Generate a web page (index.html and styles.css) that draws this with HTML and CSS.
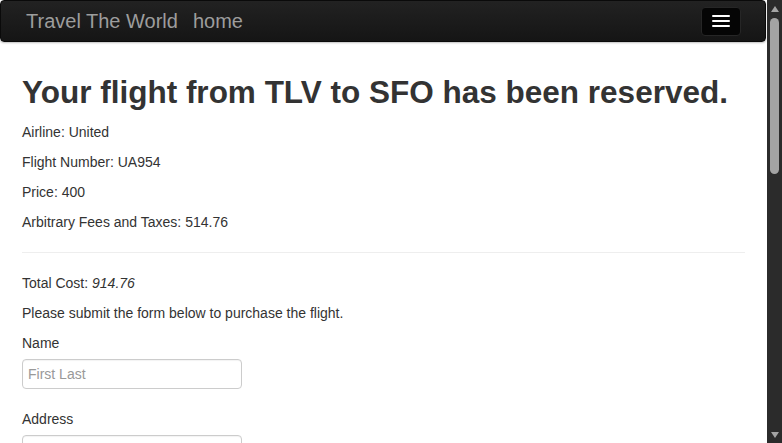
FILE: index.html
```html
<!DOCTYPE html>
<html lang="en">
<head>
<meta charset="utf-8">
<title>Travel The World</title>
<link rel="stylesheet" href="styles.css">
</head>
<body>
<div class="window">
  <div class="page">
    <nav class="navbar">
      <div class="nav-left">
        <a class="brand" href="#">Travel The World</a>
        <a class="nav-link" href="#">home</a>
      </div>
      <button class="toggle" type="button" aria-label="Toggle navigation">
        <span class="bar"></span><span class="bar"></span><span class="bar"></span>
      </button>
    </nav>
    <main class="container">
      <h1 class="title">Your flight from TLV to SFO has been reserved.</h1>
      <p class="line">Airline: United</p>
      <p class="line">Flight Number: UA954</p>
      <p class="line">Price: 400</p>
      <p class="line">Arbitrary Fees and Taxes: 514.76</p>
      <hr class="rule">
      <p class="line">Total Cost: <em>914.76</em></p>
      <p class="line">Please submit the form below to purchase the flight.</p>
      <form class="form">
        <div class="form-group">
          <label class="label" for="name">Name</label>
          <input class="input" id="name" type="text" placeholder="First Last">
        </div>
        <div class="form-group">
          <label class="label" for="address">Address</label>
          <input class="input" id="address" type="text">
        </div>
      </form>
    </main>
  </div>
  <div class="scrollbar" aria-hidden="true">
    <div class="sb-button"><span class="arrow-up"></span></div>
    <div class="sb-track"><div class="sb-thumb"></div></div>
    <div class="sb-button"><span class="arrow-down"></span></div>
  </div>
</div>
</body>
</html>
```
FILE: styles.css
```css
html,
body {
  height: 100%;
}
body {
  margin: 0;
  font-family: "Liberation Sans", Arial, Helvetica, sans-serif;
  font-size: 14px;
  line-height: 20px;
  color: #333;
  background: #fff;
  overflow: hidden;
}
.window {
  display: flex;
  height: 100%;
}
.page {
  flex: 1;
  min-width: 0;
  overflow: hidden;
}
.scrollbar {
  display: flex;
  flex-direction: column;
  width: 15px;
  flex-shrink: 0;
  background: #2b2b2b;
}
.sb-button {
  display: flex;
  align-items: center;
  justify-content: center;
  height: 17px;
}
.arrow-up {
  width: 0;
  height: 0;
  border-left: 4.5px solid transparent;
  border-right: 4.5px solid transparent;
  border-bottom: 6px solid #a3a3a3;
}
.arrow-down {
  width: 0;
  height: 0;
  border-left: 4.5px solid transparent;
  border-right: 4.5px solid transparent;
  border-top: 6px solid #a3a3a3;
}
.sb-track {
  flex: 1;
  display: flex;
  justify-content: center;
  padding-top: 1px;
}
.sb-thumb {
  width: 9px;
  height: 156px;
  background: #a3a3a3;
  border-radius: 5px;
}
.navbar {
  display: flex;
  align-items: center;
  justify-content: space-between;
  height: 40px;
  margin-right: 1px;
  background: linear-gradient(to bottom, #222 0%, #151515 100%);
  border: 1px solid #0a0a0a;
  border-radius: 4px;
  box-shadow: 0 1px 2px rgba(0, 0, 0, 0.25);
}
.nav-left {
  display: flex;
  align-items: baseline;
  gap: 15px;
  padding-left: 25px;
}
.brand,
.nav-link {
  color: #9d9d9d;
  font-size: 20px;
  line-height: 24px;
  text-decoration: none;
}
.toggle {
  display: flex;
  flex-direction: column;
  align-items: center;
  justify-content: center;
  gap: 3px;
  width: 40px;
  height: 29px;
  margin-right: 24px;
  padding: 0;
  background: #050505;
  border: 1px solid #262626;
  border-radius: 4px;
}
.bar {
  display: block;
  width: 18px;
  height: 2px;
  background: #fff;
  border-radius: 1px;
}
.container {
  padding: 0 22px;
}
.title {
  margin: 33px 0 13px;
  font-size: 31.5px;
  line-height: 34px;
  font-weight: bold;
  color: #333;
}
.line {
  margin: 0 0 10px;
}
.rule {
  margin: 20px 0;
  border: 0;
  border-top: 1px solid #eee;
}
.form {
  margin: 0;
}
.form-group {
  margin-bottom: 20px;
}
.label {
  display: block;
  margin-bottom: 6px;
  font-weight: normal;
}
.input {
  display: block;
  box-sizing: border-box;
  width: 220px;
  height: 30px;
  padding: 4px 5px;
  font-family: "Liberation Sans", Arial, Helvetica, sans-serif;
  font-size: 14px;
  color: #555;
  background: #fff;
  border: 1px solid #ccc;
  border-radius: 4px;
  box-shadow: inset 0 1px 1px rgba(0, 0, 0, 0.05);
}
.input::placeholder {
  color: #999;
}
```
